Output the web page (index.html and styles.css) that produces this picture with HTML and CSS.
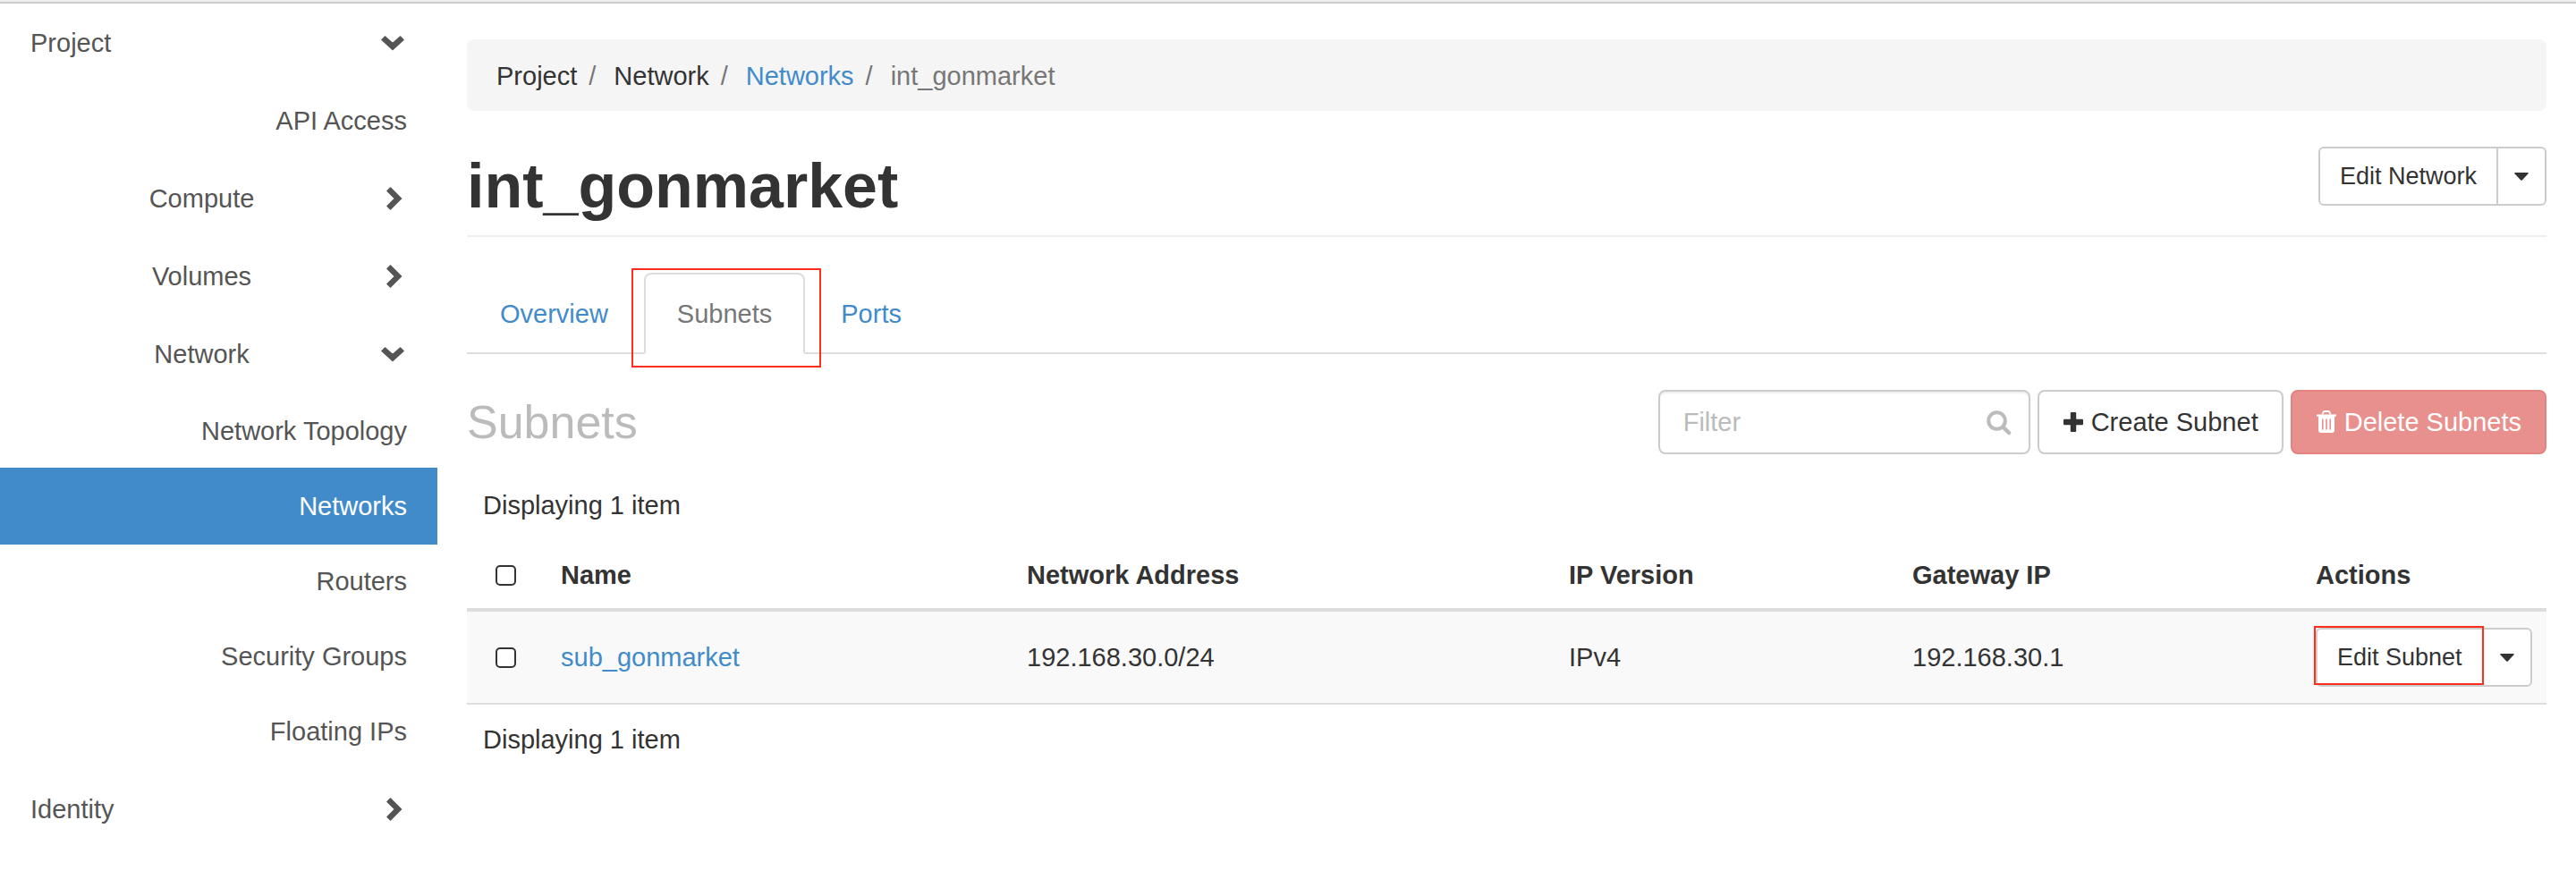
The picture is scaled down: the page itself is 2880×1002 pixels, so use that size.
FILE: index.html
```html
<!DOCTYPE html>
<html lang="en">
<head>
<meta charset="utf-8">
<title>int_gonmarket - OpenStack Dashboard</title>
<link rel="stylesheet" href="styles.css">
</head>
<body>
<svg class="sprite" aria-hidden="true">
  <symbol id="chevron-right" viewBox="0 0 26 26"><path d="M7 4.5 10.500 1 22.500 13 10.500 25 7 21.500 15.500 13z" fill="currentColor" stroke="currentColor" stroke-width="1.500" stroke-linejoin="round"/></symbol>
  <symbol id="chevron-down" viewBox="0 0 26 26"><path d="M4.500 6 1 9.500 13 20.500 25 9.500 21.500 6 13 13.500z" fill="currentColor" stroke="currentColor" stroke-width="1.500" stroke-linejoin="round"/></symbol>
  <symbol id="caret" viewBox="0 0 16 9"><path d="M1 0h14q1.200.3.500 1.200L9 8.200q-1 1-2 0L.5 1.200Q-.2.3 1 0z" fill="currentColor"/></symbol>
  <symbol id="search" viewBox="0 0 28 28"><circle cx="11.500" cy="11.500" r="9.300" fill="none" stroke="currentColor" stroke-width="4"/><path d="M18.500 18.500 25 25" stroke="currentColor" stroke-width="4.500" stroke-linecap="round"/></symbol>
  <symbol id="plus" viewBox="0 0 24 24"><path d="M9.800 1h4.400q1 0 1 1v6.800H22q1 0 1 1v4.400q0 1-1 1h-6.800V22q0 1-1 1H9.800q-1 0-1-1v-6.800H2q-1 0-1-1V9.800q0-1 1-1h6.800V2q0-1 1-1z" fill="currentColor"/></symbol>
  <symbol id="trash" viewBox="0 0 24 26"><path d="M7.500 4.500 8.500 2q.4-1 1.500-1h4q1.100 0 1.500 1l1 2.500" fill="none" stroke="currentColor" stroke-width="2"/><path d="M1 4.500h22v2.200h-2V22q0 3-3 3H6q-3 0-3-3V6.700H1zM7 9.500v12h1.600v-12zm4.200 0v12h1.600v-12zm4.200 0v12H17v-12z" fill="currentColor" fill-rule="evenodd"/></symbol>
</svg>
<div class="layout">
  <nav class="sidebar" aria-label="Dashboard">
    <a class="row" href="#">Project<svg class="chevron"><use href="#chevron-down"/></svg></a>
    <a class="row leaf" href="#">API Access</a>
    <a class="row group" href="#"><span>Compute</span><svg class="chevron"><use href="#chevron-right"/></svg></a>
    <a class="row group" href="#"><span>Volumes</span><svg class="chevron"><use href="#chevron-right"/></svg></a>
    <a class="row group" href="#"><span>Network</span><svg class="chevron"><use href="#chevron-down"/></svg></a>
    <div class="panels">
      <a class="panel" href="#">Network Topology</a>
      <a class="panel active" href="#">Networks</a>
      <a class="panel" href="#">Routers</a>
      <a class="panel" href="#">Security Groups</a>
      <a class="panel" href="#">Floating IPs</a>
    </div>
    <a class="row" href="#">Identity<svg class="chevron"><use href="#chevron-right"/></svg></a>
  </nav>
  <main class="content">
    <ol class="breadcrumb">
      <li>Project</li>
      <li>Network</li>
      <li><a href="#">Networks</a></li>
      <li class="current">int_gonmarket</li>
    </ol>
    <header class="page-header">
      <h1>int_gonmarket</h1>
      <div class="btn-group">
        <button class="btn small" type="button">Edit Network</button>
        <button class="btn small toggle" type="button" aria-label="More network actions"><svg class="caret"><use href="#caret"/></svg></button>
      </div>
    </header>
    <nav class="tabs" aria-label="Network details">
      <a class="tab" href="#">Overview</a>
      <a class="tab selected" href="#">Subnets<span class="mark mark-tab"></span></a>
      <a class="tab" href="#">Ports</a>
    </nav>
    <section>
      <div class="toolbar">
        <h2>Subnets</h2>
        <div class="actions">
          <div class="filter">
            <input type="text" placeholder="Filter" aria-label="Filter">
            <svg class="search"><use href="#search"/></svg>
          </div>
          <button class="btn" type="button"><svg class="icon"><use href="#plus"/></svg>Create Subnet</button>
          <button class="btn danger" type="button"><svg class="icon"><use href="#trash"/></svg>Delete Subnets</button>
        </div>
      </div>
      <p class="count">Displaying 1 item</p>
      <table>
        <colgroup>
          <col class="col-check"><col class="col-name"><col class="col-address"><col class="col-version"><col class="col-gateway"><col class="col-actions">
        </colgroup>
        <thead>
          <tr>
            <th class="check"><input type="checkbox" aria-label="Select all subnets"></th>
            <th>Name</th><th>Network Address</th><th>IP Version</th><th>Gateway IP</th><th>Actions</th>
          </tr>
        </thead>
        <tbody>
          <tr>
            <td class="check"><input type="checkbox" aria-label="Select sub_gonmarket"></td>
            <td><a href="#">sub_gonmarket</a></td>
            <td>192.168.30.0/24</td>
            <td>IPv4</td>
            <td>192.168.30.1</td>
            <td>
              <div class="btn-group">
                <button class="btn small" type="button">Edit Subnet<span class="mark mark-button"></span></button>
                <button class="btn small toggle" type="button" aria-label="More subnet actions"><svg class="caret"><use href="#caret"/></svg></button>
              </div>
            </td>
          </tr>
        </tbody>
      </table>
      <p class="count last">Displaying 1 item</p>
    </section>
  </main>
</div>
</body>
</html>
```
FILE: styles.css
```css
* { box-sizing: border-box; }

body {
  margin: 0;
  border-top: 2px solid #eee;
  background: #fff;
  color: #333;
  font: 29px/42px "Helvetica Neue", "Liberation Sans", Arial, sans-serif;
}

a { color: #428bca; text-decoration: none; }
h1, h2, p, ol { margin: 0; }
svg { display: block; flex: none; }
.sprite { position: absolute; width: 0; height: 0; }

.layout {
  display: flex;
  border-top: 2px solid #ccc;
}

/* Sidebar */
.sidebar { flex: none; width: 489px; }

.row, .panel {
  display: flex;
  align-items: center;
  color: #555;
}
.row {
  justify-content: space-between;
  height: 87px;
  padding: 0 37px 0 34px;
}
.row.leaf { justify-content: flex-end; padding-right: 34px; }
.row.group span { flex: 1; text-align: center; }
.chevron { width: 26px; height: 26px; margin-left: 9px; }

.panels { padding: 1px 0; }
.panel {
  justify-content: flex-end;
  height: 84px;
  padding-right: 34px;
}
.panel.active {
  background: #428bca;
  box-shadow: 0 1px #428bca, 0 -1px #428bca;
  color: #fff;
}

/* Content */
.content {
  flex: 1;
  min-width: 0;
  padding: 40px 33px 40px;
}

.breadcrumb {
  display: flex;
  height: 80px;
  align-items: center;
  padding: 2px 33px 0;
  border-radius: 8px;
  background: #f5f5f5;
  list-style: none;
}
.breadcrumb li + li::before {
  content: "/";
  padding: 0 20px 0 13px;
  color: #777;
}
.breadcrumb .current { color: #777; }

.page-header {
  display: flex;
  justify-content: space-between;
  align-items: flex-start;
  margin-top: 40px;
  padding-bottom: 11px;
  border-bottom: 2px solid #eee;
}
h1 { font-size: 70px; line-height: 88px; font-weight: 700; }

.btn {
  position: relative;
  display: flex;
  align-items: center;
  justify-content: center;
  gap: 8px;
  height: 72px;
  padding: 0 26px;
  border: 2px solid #ccc;
  border-radius: 8px;
  background: #fff;
  color: #333;
  font: inherit;
  white-space: nowrap;
}
.btn.small { height: 66px; padding: 0 22px; border-radius: 6px; font-size: 27px; }
.btn.danger { border-color: #e4827f; background: #e8908d; color: #fff; }
.icon { width: 24px; height: 26px; }

.btn-group { display: flex; }
.btn-group .btn:first-child { border-radius: 6px 0 0 6px; }
.btn-group .toggle { margin-left: -2px; padding: 0 18px; border-radius: 0 6px 6px 0; }
.caret { width: 16px; height: 9px; }

.tabs {
  display: flex;
  gap: 3px;
  margin-top: 40px;
  border-bottom: 2px solid #ddd;
}
.tab {
  position: relative;
  height: 91px;
  margin-bottom: -2px;
  padding: 23px 35px;
  border: 2px solid transparent;
}
.tab.selected {
  border-color: #ddd #ddd #fff;
  border-radius: 8px 8px 0 0;
  background: #fff;
  color: #777;
}

/* Red highlight frames laid over a tab or a button */
.mark {
  position: absolute;
  border: 2px solid #ff2d1a;
  pointer-events: none;
}
.mark-tab { inset: -7px -20px -17px -16px; }
.mark-button { inset: -4px -2px 0 -4px; z-index: 1; }
.btn:has(.mark) { z-index: 1; }

.toolbar {
  display: flex;
  justify-content: space-between;
  align-items: center;
  margin-top: 40px;
}
h2 { color: #bbb; font-size: 52px; line-height: 72px; font-weight: 400; }
.actions { display: flex; gap: 8px; }

.filter { position: relative; width: 416px; }
.filter input {
  width: 100%;
  height: 72px;
  padding: 0 60px 0 26px;
  border: 2px solid #ccc;
  border-radius: 8px;
  box-shadow: inset 0 2px 2px #eee;
  color: #333;
  font: inherit;
}
.filter input::placeholder { color: #bbb; opacity: 1; }
.search { position: absolute; top: 23px; right: 21px; width: 28px; height: 28px; color: #bbb; }

.count { margin-top: 18px; padding: 18px 18px 0; }
.count.last { margin-top: 0; }

table {
  width: 100%;
  border-collapse: separate;
  border-spacing: 0;
  table-layout: fixed;
}
.col-check { width: 87px; }
.col-name { width: 521px; }
.col-address { width: 606px; }
.col-version { width: 384px; }
.col-gateway { width: 451px; }
.col-actions { width: 276px; }

th, td { padding: 18px; text-align: left; vertical-align: middle; }
th { padding-top: 36px; padding-bottom: 16px; border-bottom: 4px solid #ddd; font-weight: 700; }
td { border-bottom: 2px solid #ddd; background: #f9f9f9; }
.check { text-align: center; }

input[type="checkbox"] {
  display: block;
  appearance: none;
  width: 23px;
  height: 23px;
  margin: 0 auto;
  border: 2px solid #333;
  border-radius: 5px;
  background: #fff;
}
```
